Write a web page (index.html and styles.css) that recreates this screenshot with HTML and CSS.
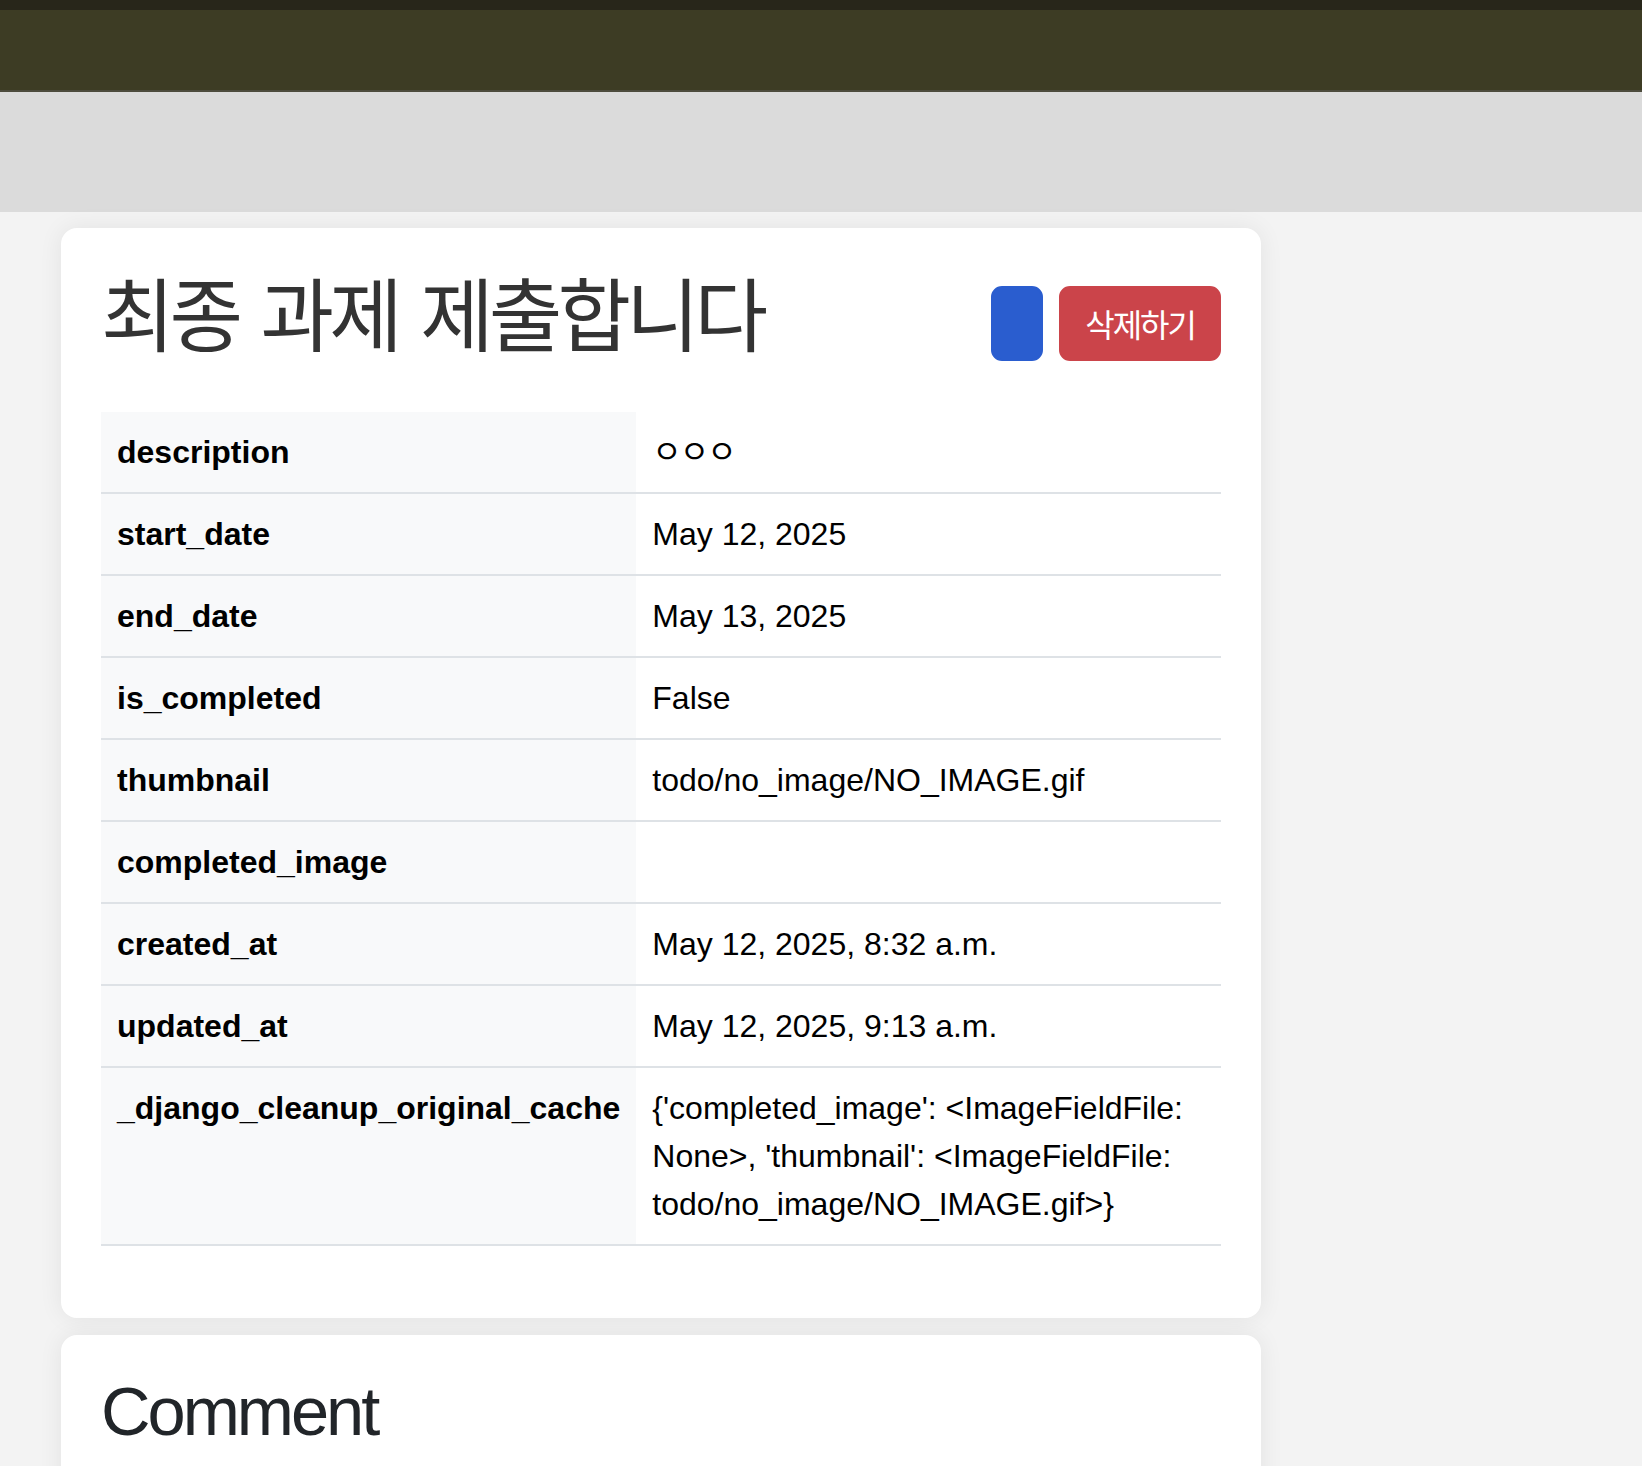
FILE: index.html
```html
<!DOCTYPE html>
<html lang="ko">
<head>
<meta charset="utf-8">
<title>최종 과제 제출합니다</title>
<link rel="stylesheet" href="styles.css">
</head>
<body>
<div class="topbar"></div>
<nav class="navbar"></nav>
<div class="banner"></div>
<main class="content">
  <section class="card">
    <div class="card-head">
      <h1 class="title">최종 과제 제출합니다</h1>
      <div class="actions">
        <a class="btn btn-primary" href="#"></a>
        <a class="btn btn-danger" href="#">삭제하기</a>
      </div>
    </div>
    <table class="detail">
      <tr><th>description</th><td class="jamo">ㅇㅇㅇ</td></tr>
      <tr><th>start_date</th><td>May 12, 2025</td></tr>
      <tr><th>end_date</th><td>May 13, 2025</td></tr>
      <tr><th>is_completed</th><td>False</td></tr>
      <tr><th>thumbnail</th><td>todo/no_image/NO_IMAGE.gif</td></tr>
      <tr><th>completed_image</th><td></td></tr>
      <tr><th>created_at</th><td>May 12, 2025, 8:32 a.m.</td></tr>
      <tr><th>updated_at</th><td>May 12, 2025, 9:13 a.m.</td></tr>
      <tr><th>_django_cleanup_original_cache</th><td>{'completed_image': &lt;ImageFieldFile: None&gt;, 'thumbnail': &lt;ImageFieldFile: todo/no_image/NO_IMAGE.gif&gt;}</td></tr>
    </table>
  </section>
  <section class="card comment-card">
    <h1 class="comment-title">Comment</h1>
  </section>
</main>
</body>
</html>
```
FILE: styles.css
```css
* { box-sizing: border-box; }
html, body { margin: 0; padding: 0; }
body {
  background: #f3f3f3;
  font-family: "Liberation Sans", Arial, "Noto Sans CJK KR", sans-serif;
  color: #000;
  overflow: hidden;
}
.topbar { height: 10px; background: #28261a; }
.navbar { height: 82px; background: #3d3c24; border-bottom: 2px solid #4d4c3d; }
.banner { height: 120px; background: #dbdbdb; }
.content {
  padding: 16px 0 0 61px;
  display: flex;
  flex-direction: column;
  gap: 17px;
}
.card {
  width: 1200px;
  background: #fff;
  border-radius: 16px;
  box-shadow: 0 0 24px rgba(0, 0, 0, 0.07);
  padding: 40px;
}
.card-head {
  display: flex;
  justify-content: space-between;
  align-items: flex-start;
}
.title {
  margin: -6px 0 0;
  font-family: "Noto Sans CJK KR", "Liberation Sans", sans-serif;
  font-weight: 400;
  font-size: 80px;
  line-height: 96px;
  letter-spacing: -5px;
  word-spacing: 5px;
  color: #333;
}
.actions {
  display: flex;
  gap: 16px;
  margin-top: 18px;
}
.btn {
  display: block;
  height: 75px;
  padding: 0 24px;
  border: 2px solid transparent;
  border-radius: 11px;
  font-family: "Noto Sans CJK KR", sans-serif;
  font-size: 32px;
  line-height: 71px;
  color: #fff;
  text-decoration: none;
  letter-spacing: -2px;
}
.btn-primary { width: 52px; padding: 0; background: #2a5dcf; border-color: #2a5dcf; }
.btn-danger { background: #cb444a; border-color: #cb444a; }
.detail {
  width: 100%;
  margin: 51px 0 32px;
  border-collapse: collapse;
  font-size: 32px;
  line-height: 48px;
}
.detail tr { border-bottom: 2px solid #dee2e6; }
.detail th, .detail td {
  padding: 16px;
  text-align: left;
  vertical-align: top;
}
.detail th {
  width: 535px;
  background: #f8f9fa;
  font-weight: 700;
  white-space: nowrap;
}
.detail td { background: #fff; }
.detail .jamo {
  font-family: "Noto Sans CJK KR", sans-serif;
  letter-spacing: -2px;
  padding-top: 13px;
  padding-bottom: 19px;
}
.comment-card { min-height: 400px; }
.comment-title {
  margin: -4px 0 0;
  font-weight: 400;
  font-size: 68.6px;
  line-height: 82px;
  letter-spacing: -3px;
  color: #212529;
}
```
